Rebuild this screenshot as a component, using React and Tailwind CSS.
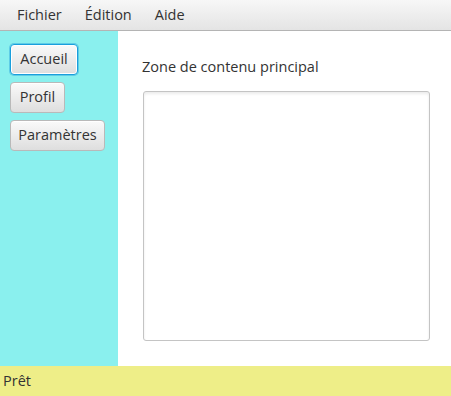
import React from "react";

const FONT = { fontFamily: '"Open Sans", "Noto Sans", sans-serif' };

function SideButton({ label, width, focused }) {
  return (
    <button
      type="button"
      className={
        "h-[31px] rounded-[4px] border bg-gradient-to-b from-[#fafafa] to-[#dedede] text-[14.5px] leading-none text-[#333333] " +
        width +
        (focused
          ? " border-[#1a9fdc] shadow-[0_0_0_1px_rgba(40,160,220,0.45),inset_0_0_0_1px_#ffffff]"
          : " border-[#b9b9b9] shadow-[inset_0_1px_0_#ffffff]")
      }
    >
      {label}
    </button>
  );
}

export default function App() {
  return (
    <div className="flex h-[396px] w-[451px] flex-col overflow-hidden bg-white text-[#333333]" style={FONT}>
      <div className="flex h-[31px] shrink-0 items-center gap-[23px] border-b border-[#b4b4b4] bg-gradient-to-b from-[#f7f7f7] to-[#e4e4e4] pb-[1px] pl-[17px] text-[14.5px]">
        <span>Fichier</span>
        <span>Édition</span>
        <span>Aide</span>
      </div>

      <div className="flex min-h-0 flex-1">
        <div className="flex w-[118px] shrink-0 flex-col items-start gap-[7px] bg-[#8af0ee] pl-[10px] pt-[13px]">
          <SideButton label="Accueil" width="w-[68px]" focused />
          <SideButton label="Profil" width="w-[55px]" />
          <SideButton label="Paramètres" width="w-[95px]" />
        </div>

        <div className="flex flex-1 flex-col bg-white pb-[25px] pl-[25px] pr-[21px] pt-[26px]">
          <div className="-ml-[1px] h-[20px] text-[14.5px] leading-[20px]">Zone de contenu principal</div>
          <textarea
            className="mt-[14px] flex-1 resize-none rounded-[3px] border border-[#c4c4c4] bg-white shadow-[inset_0_2px_3px_rgba(0,0,0,0.08)] outline-none"
            defaultValue=""
          />
        </div>
      </div>

      <div className="flex h-[30px] shrink-0 items-center bg-[#eeee88] pl-[3px] text-[14.5px]">
        Prêt
      </div>
    </div>
  );
}
